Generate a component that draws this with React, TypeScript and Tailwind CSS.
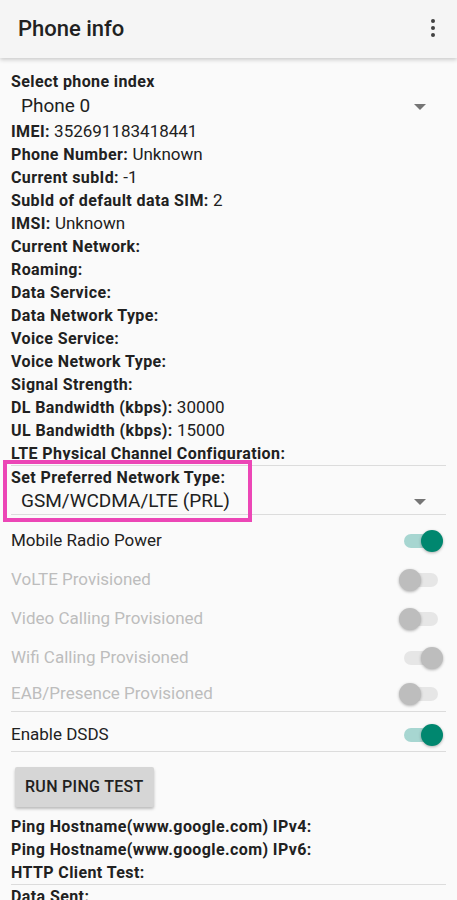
import { Fragment } from 'react';

type Info = { label: string; value?: string };

const infoRows: Info[] = [
  { label: 'IMEI:', value: '352691183418441' },
  { label: 'Phone Number:', value: 'Unknown' },
  { label: 'Current subId:', value: '-1' },
  { label: 'SubId of default data SIM:', value: '2' },
  { label: 'IMSI:', value: 'Unknown' },
  { label: 'Current Network:' },
  { label: 'Roaming:' },
  { label: 'Data Service:' },
  { label: 'Data Network Type:' },
  { label: 'Voice Service:' },
  { label: 'Voice Network Type:' },
  { label: 'Signal Strength:' },
  { label: 'DL Bandwidth (kbps):', value: '30000' },
  { label: 'UL Bandwidth (kbps):', value: '15000' },
  { label: 'LTE Physical Channel Configuration:' },
];

function Row({ label, value }: Info) {
  return (
    <div className="h-[23px] leading-[23px] text-[16px] text-[#212121] whitespace-nowrap">
      <span className="font-bold tracking-[0.4px]">{label}</span>
      {value && <span className="text-[17px]"> {value}</span>}
    </div>
  );
}

function Caret() {
  return (
    <svg width="12" height="6" viewBox="0 0 12 6" className="mr-[20px]">
      <path d="M0 0h12L6 6z" fill="#757575" />
    </svg>
  );
}

function Toggle({ on, disabled }: { on: boolean; disabled?: boolean }) {
  const track = on ? (disabled ? 'bg-[#e6e6e6]' : 'bg-[#a7d6d1]') : 'bg-[#e6e6e6]';
  const thumb = on ? (disabled ? 'bg-[#bdbdbd]' : 'bg-[#00876f]') : 'bg-[#bdbdbd]';
  return (
    <div className="relative w-[44px] h-[22px] mr-[3px] flex items-center">
      <div className={`w-[34px] h-[14px] rounded-full mx-[5px] ${track}`} />
      <div
        className={`absolute top-0 w-[22px] h-[22px] rounded-full shadow-[0_1px_3px_rgba(0,0,0,0.3)] ${thumb} ${on ? 'right-0' : 'left-0'}`}
      />
    </div>
  );
}

function SwitchRow({ label, on, disabled, h }: { label: string; on: boolean; disabled?: boolean; h: string }) {
  return (
    <div className={`flex items-center justify-between ${h}`}>
      <span className={`text-[17px] ${disabled ? 'text-[#bdbdbd]' : 'text-[#212121]'}`}>{label}</span>
      <Toggle on={on} disabled={disabled} />
    </div>
  );
}

export default function App() {
  return (
    <div className="w-[457px] h-[900px] overflow-hidden bg-[#fafafa] font-['Roboto',sans-serif]">
      {/* Toolbar */}
      <div className="relative z-10 h-[58px] bg-[#f5f5f5] flex items-center justify-between pl-[18px] pr-[22px] shadow-[0_2px_4px_rgba(0,0,0,0.18)]">
        <h1 className="text-[22px] font-medium text-[#212121] mt-[-2px]">Phone info</h1>
        <div className="flex flex-col gap-[3px] items-center mt-[-2px]">
          <span className="w-[4px] h-[4px] rounded-full bg-[#424242]" />
          <span className="w-[4px] h-[4px] rounded-full bg-[#424242]" />
          <span className="w-[4px] h-[4px] rounded-full bg-[#424242]" />
        </div>
      </div>

      <div className="pl-[11px] pr-[11px] pt-[12px]">
        <div className="h-[23px] leading-[23px] text-[16px] font-bold tracking-[0.4px] text-[#212121]">Select phone index</div>
        <div className="flex items-center justify-between h-[27px]">
          <span className="ml-[10px] text-[19px] text-[#212121]">Phone 0</span>
          <Caret />
        </div>

        {infoRows.map((r) => (
          <Fragment key={r.label}>
            <Row {...r} />
          </Fragment>
        ))}

        <div className="h-px bg-[#dcdcdc]" />

        {/* Preferred network type */}
        <div className="relative">
          <div className="absolute left-[-8px] top-[-6px] w-[249px] h-[62px] border-[4px] border-[#ec46b6]" />
          <div className="h-[23px] leading-[23px] text-[16px] font-bold tracking-[0.4px] text-[#212121]">Set Preferred Network Type:</div>
          <div className="flex items-center justify-between h-[25px]">
            <span className="ml-[10px] text-[19px] text-[#212121]">GSM/WCDMA/LTE (PRL)</span>
            <Caret />
          </div>
        </div>
        <div className="h-px bg-[#dcdcdc]" />

        <div className="pt-[6px]">
          <SwitchRow label="Mobile Radio Power" on h="h-[39px]" />
          <SwitchRow label="VoLTE Provisioned" on={false} disabled h="h-[39px]" />
          <SwitchRow label="Video Calling Provisioned" on={false} disabled h="h-[39px]" />
          <SwitchRow label="Wifi Calling Provisioned" on disabled h="h-[39px]" />
          <SwitchRow label="EAB/Presence Provisioned" on={false} disabled h="h-[34px]" />
        </div>
        <div className="h-px bg-[#dcdcdc]" />
        <div className="pt-[7px]">
          <SwitchRow label="Enable DSDS" on h="h-[32px]" />
        </div>
        <div className="h-px bg-[#dcdcdc]" />

        <button className="mt-[15px] ml-[4px] h-[40px] px-[10px] bg-[#d6d6d6] text-[16px] font-medium tracking-[0.3px] text-[#212121] rounded-[2px] shadow-[0_2px_3px_rgba(0,0,0,0.25)]">
          RUN PING TEST
        </button>

        <div className="mt-[8px]">
          <Row label="Ping Hostname(www.google.com) IPv4:" />
          <Row label="Ping Hostname(www.google.com) IPv6:" />
          <Row label="HTTP Client Test:" />
        </div>
        <div className="h-px bg-[#dcdcdc]" />
        <Row label="Data Sent:" />
      </div>
    </div>
  );
}
